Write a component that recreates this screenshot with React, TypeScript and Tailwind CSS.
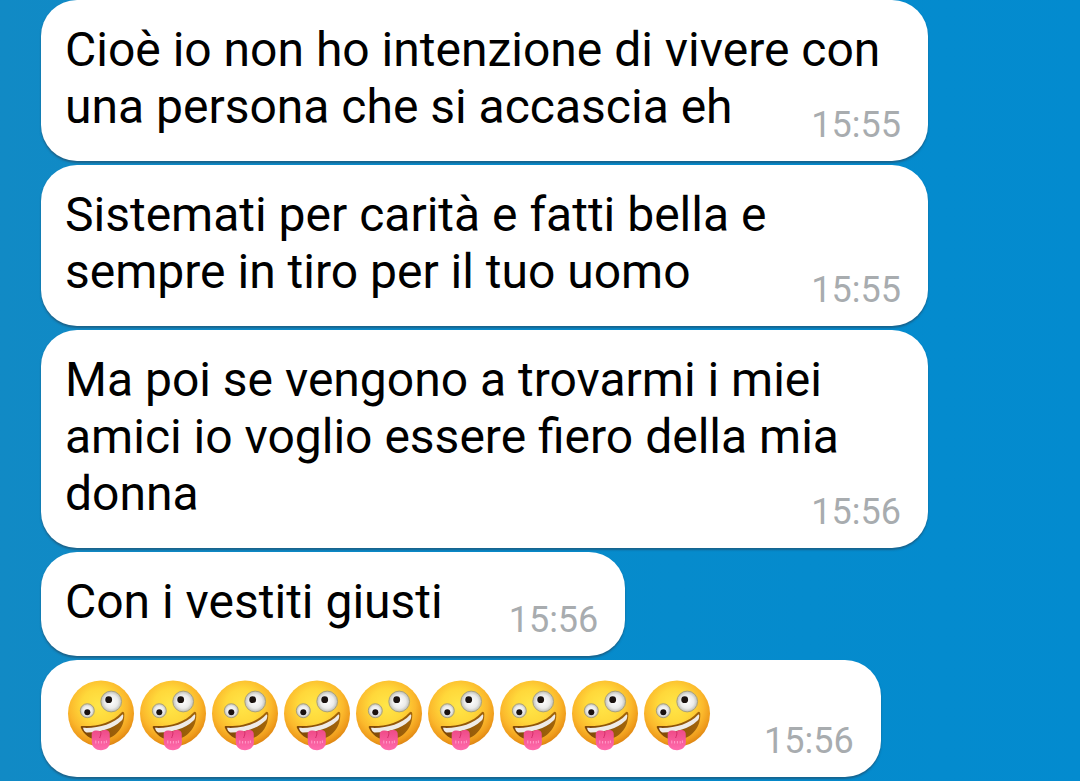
type MessageType = {
  text: string;
  time: string;
};

const messages: MessageType[] = [
  {
    text: "Cioè io non ho intenzione di vivere con una persona che si accascia eh",
    time: "15:55",
  },
  {
    text: "Sistemati per carità e fatti bella e sempre in tiro per il tuo uomo",
    time: "15:55",
  },
  {
    text: "Ma poi se vengono a trovarmi i miei amici io voglio essere fiero della mia donna",
    time: "15:56",
  },
  { text: "Con i vestiti giusti", time: "15:56" },
];

const ZanyFace = ({ id }: { id: string }) => {
  return (
    <svg viewBox="0 0 72 76" className="h-[76px] w-[72px]" aria-hidden="true">
      <defs>
        <radialGradient id={`${id}-face`} cx="0.46" cy="0.38" r="0.63">
          <stop offset="0" stopColor="#ffe648" />
          <stop offset="0.4" stopColor="#ffd83a" />
          <stop offset="0.7" stopColor="#fbb82c" />
          <stop offset="0.88" stopColor="#ef9c1c" />
          <stop offset="1" stopColor="#dd8412" />
        </radialGradient>
        <radialGradient id={`${id}-eye`}>
          <stop offset="0" stopColor="#ffffff" />
          <stop offset="0.65" stopColor="#ebebe9" />
          <stop offset="1" stopColor="#bdbdb6" />
        </radialGradient>
        <linearGradient id={`${id}-mouth`} x1="0" y1="0" x2="1" y2="0">
          <stop offset="0" stopColor="#7d4707" />
          <stop offset="1" stopColor="#a3650a" />
        </linearGradient>
        <linearGradient id={`${id}-tongue`} x1="0" y1="0" x2="0" y2="1">
          <stop offset="0" stopColor="#ee4a86" />
          <stop offset="1" stopColor="#ff6bad" />
        </linearGradient>
      </defs>
      <circle cx="36" cy="37.5" r="33" fill={`url(#${id}-face)`} />
      {/* eyes */}
      <circle cx="22.3" cy="34.7" r="7" fill={`url(#${id}-eye)`} stroke="#a9a17c" strokeWidth="1" />
      <circle cx="22.3" cy="36.3" r="3" fill="#1b1310" />
      <circle cx="46.2" cy="25.5" r="10.4" fill={`url(#${id}-eye)`} stroke="#a9a17c" strokeWidth="1" />
      <circle cx="43.7" cy="23.7" r="3.4" fill="#1b1310" />
      {/* mouth, teeth */}
      <path
        d="M16.6 50C31 50.8 47.5 46.8 56.5 36.4C57.8 35.2 59.3 36 59.3 37.8C59.8 53 49 63.5 35.5 64C26 64.3 18.5 58.5 16 52C15.5 50.8 15.7 50 16.6 50Z"
        fill={`url(#${id}-mouth)`}
      />
      <path
        d="M18 51.8C32 52.6 48.5 48.6 57 38.8C58 38 58.4 38.8 58.2 40.4C58 42.8 57.4 43.8 56 45C48 53 34 56.6 21.4 56.4C19.6 56.3 18.4 53.8 18 51.8Z"
        fill="#eeebe8"
      />
      {/* tongue */}
      <path
        d="M26.7 58C26.7 56 28.5 54.8 30.6 54.6C32.5 54.4 34 54.8 35.3 55.4C36.8 54.4 38.5 53.8 40.4 53.9C43 54 44.6 55.4 44.7 57.5L44.9 66C44.9 71 41 74.2 36 74.2C31 74.2 27 71 26.8 66.5Z"
        fill={`url(#${id}-tongue)`}
      />
      <path d="M35.8 55.5C36.2 58 35.4 60 34.6 62" fill="none" stroke="#d52f6c" strokeWidth="1" />
      <path d="M30.8 64.5V67.5M33.6 65V67.5M36.4 65V67.5M39.2 65V67.5M41.4 64.5V67" stroke="#ff9cca" strokeWidth="1" />
    </svg>
  );
};

export default function App() {
  return (
    <div className="min-h-screen bg-linear-to-r from-[#118ac5] via-[#078bcb] to-[#038bcf] font-[Roboto,sans-serif]">
      <div className="flex flex-col items-start gap-1 pr-[152px] pb-1 pl-[41px]">
        {messages.map((message, indx) => {
          return (
            <div
              key={indx}
              className="rounded-[36px] bg-white pt-[21px] pr-[27px] pb-[15px] pl-6 shadow-[0_2px_2px_rgba(40,60,80,0.5)]"
            >
              <p className="flow-root text-[48px] leading-[57px] text-black">
                {message.text}
                {/* floats beside the last line of the message */}
                <time className="float-right mt-[26px] ml-[66px] text-[36px] leading-[42px] text-[#a8acaf]">
                  {message.time}
                </time>
              </p>
            </div>
          );
        })}
        <div className="flex items-end rounded-[36px] bg-white pt-4 pr-[27px] pb-[15px] pl-6 shadow-[0_2px_2px_rgba(40,60,80,0.5)]">
          <div className="mb-[10px] flex" role="img" aria-label="🤪🤪🤪🤪🤪🤪🤪🤪🤪">
            {Array.from({ length: 9 }).map((_, indx) => (
              <ZanyFace key={indx} id={`zany${indx}`} />
            ))}
          </div>
          <time className="ml-[51px] text-[36px] leading-[42px] text-[#a8acaf]">15:56</time>
        </div>
      </div>
    </div>
  );
}
